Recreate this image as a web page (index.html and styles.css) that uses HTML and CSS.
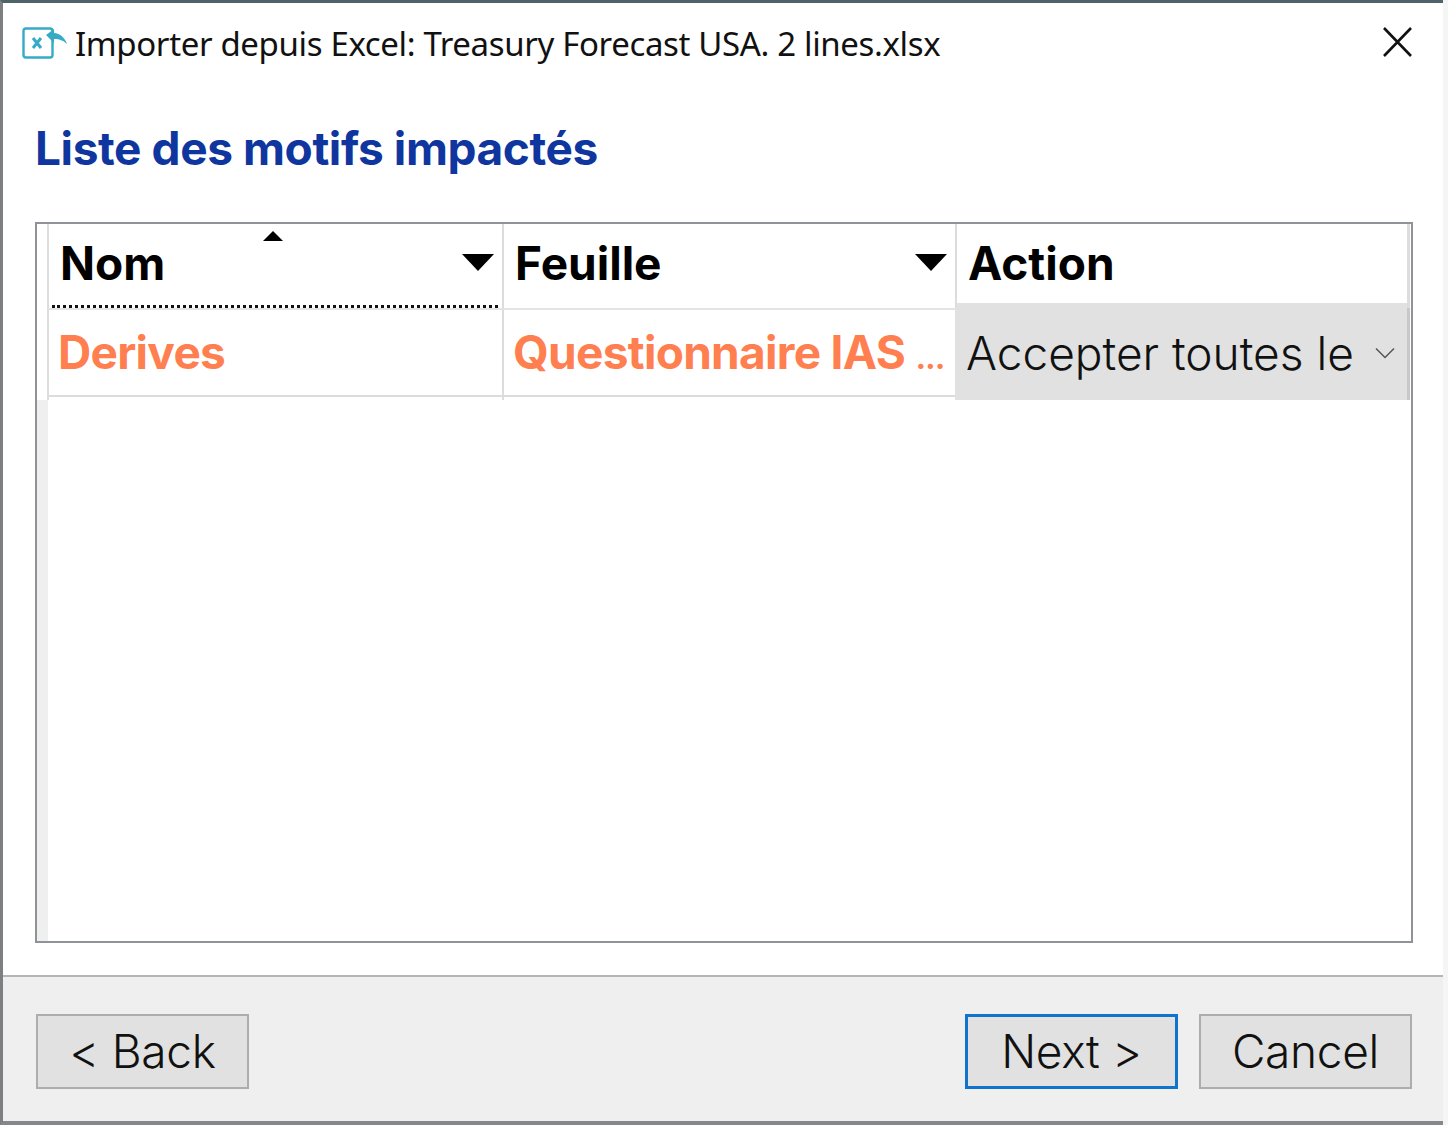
FILE: index.html
```html
<!DOCTYPE html>
<html lang="fr">
<head>
    <meta charset="UTF-8">
    <title>Importer depuis Excel</title>
    <link rel="stylesheet" href="styles.css">
</head>
<body>
    <div class="window">
        <div class="titlebar">
            <svg class="app-icon" width="46" height="34" viewBox="0 0 46 34">
                <rect x="1.5" y="2.5" width="29" height="29" rx="2.5" fill="none" stroke="#35abc6" stroke-width="2.4"/>
                <path d="M11 12l8 10M19 12l-8 10" fill="none" stroke="#35abc6" stroke-width="3"/>
                <path d="M24 9l8-6v4c6 0 11 5 13 11-3-3-7-5-13-5v4z" fill="#35abc6"/>
            </svg>
            <span class="title-text">Importer depuis Excel: Treasury Forecast USA. 2 lines.xlsx</span>
            <svg class="close-icon" width="30" height="30" viewBox="0 0 30 30">
                <path d="M2 1l27 28M29 1L2 29" fill="none" stroke="#111" stroke-width="2.6"/>
            </svg>
        </div>

        <div class="content">
            <h1>Liste des motifs impactés</h1>

            <div class="grid-box">
                <div class="grid-head">
                    <div class="row-gutter"></div>
                    <div class="head-cell focused">
                        <span class="sort-arrow"></span>
                        <span>Nom</span>
                        <span class="filter-arrow"></span>
                    </div>
                    <div class="head-cell">
                        <span>Feuille</span>
                        <span class="filter-arrow"></span>
                    </div>
                    <div class="head-cell last">
                        <span>Action</span>
                    </div>
                </div>
                <div class="grid-row">
                    <div class="row-gutter"></div>
                    <div class="cell name-cell">Derives</div>
                    <div class="cell sheet-cell">Questionnaire IAS <span class="dots">...</span></div>
                    <div class="combo-cell">
                        <span class="combo-text">Accepter toutes le</span>
                        <svg width="20" height="12" viewBox="0 0 20 12">
                            <path d="M1 1.5l9 9 9-9" fill="none" stroke="#555" stroke-width="1.5"/>
                        </svg>
                    </div>
                </div>
                <div class="grid-empty">
                    <div class="empty-gutter"></div>
                </div>
            </div>
        </div>

        <div class="footer">
            <button class="btn">&lt; Back</button>
            <div class="footer-right">
                <button class="btn primary">Next &gt;</button>
                <button class="btn">Cancel</button>
            </div>
        </div>
    </div>
</body>
</html>
```

FILE: styles.css
```css
* {
    box-sizing: border-box;
}
html, body {
    margin: 0;
    height: 100%;
}
body {
    background-color: #f4f5f5;
    padding: 0 5px 0 0;
    font-family: Inter, "Liberation Sans", sans-serif;
    color: #000;
    overflow: hidden;
}
.window {
    display: flex;
    flex-direction: column;
    height: 100%;
    background-color: #fff;
    border-top: 3px solid #4f636b;
    border-left: 3px solid #7d8082;
    border-bottom: 4px solid #85888a;
}
.titlebar {
    display: flex;
    align-items: center;
    height: 80px;
    padding: 0 31px 0 19px;
}
.app-icon {
    margin-right: 7px;
    flex: none;
}
.close-icon {
    margin-bottom: 2px;
}
.title-text {
    flex: 1;
    font-family: "Noto Sans", sans-serif;
    font-size: 33px;
    color: #111;
    letter-spacing: -0.36px;
}
.content {
    flex: 1;
    display: flex;
    flex-direction: column;
    padding: 0 30px 32px 32px;
    border-bottom: 2px solid #b5b5b5;
}
h1 {
    margin: 34px 0 43px;
    font-size: 46px;
    line-height: 62px;
    font-weight: 700;
    letter-spacing: -0.4px;
    color: #0f369e;
}
.grid-box {
    flex: 1;
    display: flex;
    flex-direction: column;
    border: 2px solid #8f9296;
}
.grid-head {
    display: grid;
    grid-template-columns: 10px 455px 453px 455px;
    height: 84px;
}
.grid-row {
    display: grid;
    grid-template-columns: 10px 455px 453px 455px;
    height: 92px;
}
.row-gutter {
    background-color: #fff;
}
.head-cell {
    position: relative;
    display: flex;
    align-items: center;
    justify-content: space-between;
    padding: 0 8px 7px 11px;
    font-size: 46px;
    font-weight: 700;
    border-left: 2px solid #dcdcdc;
}
.head-cell.last {
    border-right: 3px solid #dcdcdc;
}
.head-cell.focused::after {
    content: "";
    position: absolute;
    left: 3px;
    right: 4px;
    bottom: 0;
    border-bottom: 3px dotted #111;
}
.sort-arrow {
    position: absolute;
    left: 214px;
    top: 7px;
    border-left: 10px solid transparent;
    border-right: 10px solid transparent;
    border-bottom: 10px solid #000;
}
.filter-arrow {
    border-left: 16px solid transparent;
    border-right: 16px solid transparent;
    border-top: 17px solid #000;
}
.cell {
    position: relative;
    display: flex;
    align-items: center;
    height: 89px;
    padding: 0 0 2px 9px;
    font-size: 46px;
    font-weight: 700;
    letter-spacing: -0.7px;
    color: #ff7f50;
    white-space: pre;
    border-left: 2px solid #dcdcdc;
    border-top: 2px solid #e4e4e4;
    border-bottom: 2px solid #dcdcdc;
}
.cell::after {
    content: "";
    position: absolute;
    left: -2px;
    bottom: -5px;
    width: 2px;
    height: 3px;
    background-color: #dcdcdc;
}
.dots {
    font-size: 32px;
    padding-top: 12px;
    letter-spacing: -1px;
}
.combo-cell {
    display: flex;
    align-items: center;
    justify-content: space-between;
    height: 97px;
    margin-top: -5px;
    padding: 2px 12px 0 11px;
    background-color: #e1e1e1;
    border-right: 3px solid #c8c8c8;
    font-size: 46px;
    font-weight: 300;
    color: #111;
    white-space: nowrap;
}
.grid-empty {
    flex: 1;
    display: flex;
}
.empty-gutter {
    width: 11px;
    background-color: #efefef;
}
.footer {
    display: flex;
    align-items: flex-start;
    justify-content: space-between;
    height: 144px;
    padding: 37px 31px 0 33px;
    background-color: #efefef;
}
.footer-right {
    display: flex;
    gap: 21px;
}
.btn {
    width: 213px;
    height: 75px;
    background-color: #e1e1e1;
    border: 2px solid #adadad;
    font-family: Inter, "Liberation Sans", sans-serif;
    font-size: 46px;
    font-weight: 300;
    letter-spacing: -0.3px;
    color: #111;
    padding: 0 0 2px;
}
.btn.primary {
    border: 3px solid #0f74cc;
}
```
